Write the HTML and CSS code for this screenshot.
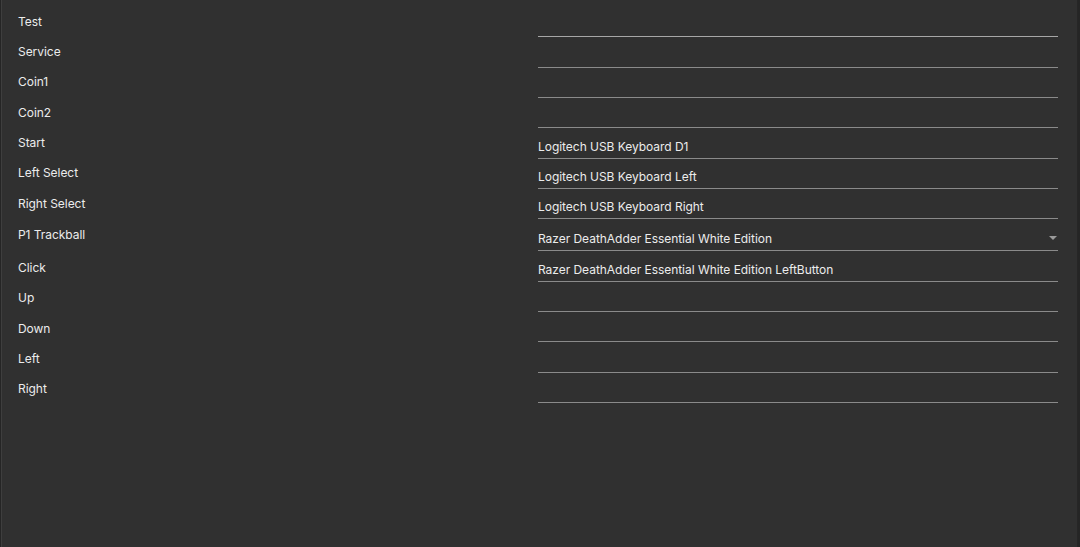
FILE: index.html
```html
<!DOCTYPE html>
<html>
<head>
<meta charset="utf-8">
<link rel="stylesheet" href="styles.css">
</head>
<body>
<div class="panel">
  <div class="form">
    <div class="row"><div class="label">Test</div><div class="field first"></div></div>
    <div class="row"><div class="label">Service</div><div class="field"></div></div>
    <div class="row"><div class="label">Coin1</div><div class="field"></div></div>
    <div class="row"><div class="label">Coin2</div><div class="field"></div></div>
    <div class="row"><div class="label">Start</div><div class="field"><span>Logitech USB Keyboard D1</span></div></div>
    <div class="row"><div class="label">Left Select</div><div class="field"><span>Logitech USB Keyboard Left</span></div></div>
    <div class="row"><div class="label">Right Select</div><div class="field"><span>Logitech USB Keyboard Right</span></div></div>
    <div class="row tall"><div class="label">P1 Trackball</div><div class="field select"><span>Razer DeathAdder Essential White Edition</span><svg class="caret" width="8" height="4" viewBox="0 0 8 4"><path d="M0 0h8L4 4z" fill="#9a9a9a"/></svg></div></div>
    <div class="row after"><div class="label">Click</div><div class="field"><span>Razer DeathAdder Essential White Edition LeftButton</span></div></div>
    <div class="row after"><div class="label">Up</div><div class="field"></div></div>
    <div class="row after"><div class="label">Down</div><div class="field"></div></div>
    <div class="row after"><div class="label">Left</div><div class="field"></div></div>
    <div class="row after"><div class="label">Right</div><div class="field"></div></div>
  </div>
</div>
</body>
</html>
```
FILE: styles.css
```css
html, body {
  margin: 0;
  padding: 0;
  height: 100%;
}
body {
  background: #252525;
  font-family: "Inter", "Noto Sans", sans-serif;
  font-size: 12px;
  letter-spacing: -0.04px;
  color: #ececec;
  overflow: hidden;
}
.panel {
  box-sizing: border-box;
  height: 547px;
  margin: 0 2px 0 1px;
  background: #303030;
  border-left: 1px solid #3e3e3e;
  border-right: 1px solid #262626;
  padding: 7px 0 0 16px;
}
.form {
  display: flex;
  flex-direction: column;
}
.row {
  display: grid;
  grid-template-columns: 520px 520px;
  height: 30.33px;
}
.row.tall {
  height: 32px;
}
.label {
  display: flex;
  align-items: center;
  padding-bottom: 1px;
  line-height: 16px;
}
.row.after .label {
  padding-top: 3px;
  padding-bottom: 0;
}
.field {
  display: flex;
  align-items: flex-end;
  justify-content: space-between;
  border-bottom: 1px solid #8a8a8a;
  padding-bottom: 3px;
  line-height: 16px;
  box-sizing: border-box;
}
.field.first {
  border-bottom-color: #a6a6a6;
}
.caret {
  margin: 0 1px 7px 0;
}
```
